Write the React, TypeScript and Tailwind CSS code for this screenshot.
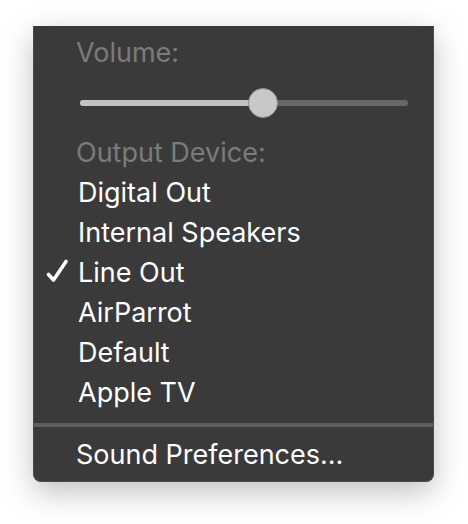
const DEVICES = ['Digital Out', 'Internal Speakers', 'Line Out', 'AirParrot', 'Default', 'Apple TV'];
const SELECTED = 'Line Out';

function VolumeSlider({ value }: { value: number }) {
  const pct = `${value * 100}%`;
  return (
    <div className="relative ml-[46px] mr-[25px] h-[60px]">
      <div className="absolute left-0 right-0 top-[27px] h-[6px] rounded-full bg-[#676767]" />
      <div className="absolute left-0 top-[27px] h-[6px] rounded-full bg-[#c3c3c3]" style={{ width: pct }} />
      <div
        className="absolute top-[15px] h-[30px] w-[30px] -translate-x-1/2 rounded-full border border-[#8e8e8e] bg-[#c8c8c8]"
        style={{ left: pct }}
      />
    </div>
  );
}

function Check() {
  return (
    <svg className="absolute left-[12px] top-[6px]" width="22" height="24" viewBox="0 0 22 24" fill="none">
      <path d="M2.5 15.5 L7.5 21 L20 2.5" stroke="white" strokeWidth="3.6" strokeLinecap="round" strokeLinejoin="round" />
    </svg>
  );
}

export default function App() {
  return (
    <div className="h-[524px] w-[468px] bg-white pt-[26px] font-['Inter',sans-serif]">
      <div className="ml-[33px] flex h-[456px] w-[401px] flex-col rounded-b-[8px] border-x border-b border-[#4a4a4a] bg-[#3a3a3a] pt-[7px] text-[27px] leading-[40px] text-white shadow-[0_10px_30px_rgba(0,0,0,0.25)]">
        <div className="pl-[42px] text-[#7b7b7b]">Volume:</div>
        <VolumeSlider value={0.557} />
        <div className="pl-[42px] text-[#7b7b7b]">Output Device:</div>
        <ul>
          {DEVICES.map((d) => (
            <li key={d} className="relative pl-[44px]">
              {d === SELECTED && <Check />}
              {d}
            </li>
          ))}
        </ul>
        <div className="mt-[10px] h-[4px] bg-[#5e5e5e]" />
        <div className="mt-[8px] pl-[42px]">Sound Preferences…</div>
      </div>
    </div>
  );
}
